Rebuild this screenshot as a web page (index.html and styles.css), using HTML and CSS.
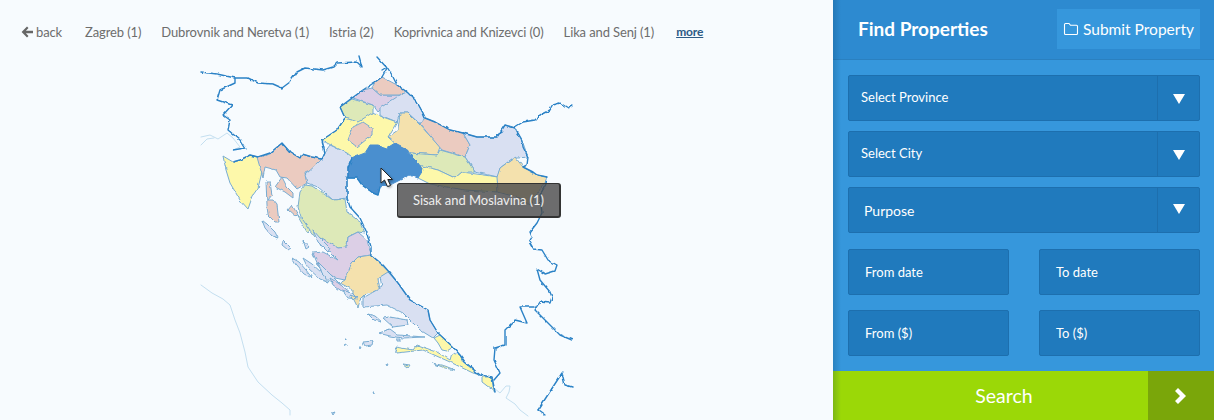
FILE: index.html
```html
<!DOCTYPE html>
<html lang="en">
<head>
<meta charset="utf-8">
<title>Find Properties</title>
<link rel="stylesheet" href="styles.css">
</head>
<body>
<div class="page">
  <main class="main">
    <nav class="crumbs">
      <a class="back" href="#"><svg class="back-icon" viewBox="0 0 12 12"><path d="M6 .6 7.500 2.100 4.900 4.700H12V7.300H4.900L7.500 9.900 6 11.400 .6 6Z"/></svg>back</a>
      <a href="#">Zagreb (1)</a>
      <a href="#">Dubrovnik and Neretva (1)</a>
      <a href="#">Istria (2)</a>
      <a href="#">Koprivnica and Knizevci (0)</a>
      <a href="#">Lika and Senj (1)</a>
      <a class="more" href="#">more</a>
    </nav>
    <div class="map-wrap">
      <svg class="map" viewBox="0 50 833 370" aria-label="Map of Croatia">
        <defs>
          <filter id="rough" filterUnits="userSpaceOnUse" x="0" y="40" width="833" height="380" color-interpolation-filters="sRGB">
            <feTurbulence type="fractalNoise" baseFrequency="0.2" numOctaves="1" seed="4"/>
            <feDisplacementMap in="SourceGraphic" scale="3.400" xChannelSelector="R" yChannelSelector="G"/>
            <feGaussianBlur stdDeviation="0.3"/>
          </filter>
        </defs>
        <!-- neighbouring coast lines -->
        <polyline class="coast" points="201,137 210,135 218,139 227,133 233,138 240,147 233,150"/>
        <polyline class="coast" points="201,145 207,139 214,138"/>
        <polyline class="coast" points="201,285 212,293 223,299 230,305 235,320 240,333 245,352 248,367 258,382 272,395 282,403 290,410 290,415"/>
        <polyline class="coast" points="494,388 500,393 506,386 510,386 509,392 506,398 515,404 520,410 528,416"/>
        <g filter="url(#rough)">
          <!-- counties -->
          <polygon class="yellow" points="223,156 233,162 240,160 250,155 258,157 263,168 258,188 253,195 248,209 240,200 230,183 226,170"/>
          <polygon class="pink" points="257,157 270,154 282,143 290,152 300,158 302,154 322,160 317,168 305,173 307,183 297,189 287,178 280,177 276,170 265,167 263,178"/>
          <polygon class="peri" points="305,175 318,163 323,158 325,152 330,145 347,153 356,158 356,178 347,177 347,198 333,200 318,187 307,183"/>
          <polygon class="green" points="305,185 312,186 333,200 345,199 347,212 360,222 365,233 358,232 348,237 347,247 338,248 320,238 315,237 302,220 298,207 300,192"/>
          <polygon class="purple" points="322,238 338,248 347,247 348,237 358,232 367,240 371,255 358,257 352,263 345,280 335,278 318,265 313,253 323,252 338,260 330,252 320,245"/>
          <polygon class="tan" points="358,257 371,255 390,273 378,278 380,290 367,293 360,300 358,308 353,298 353,290 340,283 345,280 352,263"/>
          <polygon class="peri" points="388,272 398,283 410,300 428,310 430,320 438,333 433,338 420,330 403,313 387,305 363,307 363,298 382,287 380,277"/>
          <polygon class="green" points="340,107 352,99 373,105 373,113 360,123 345,118"/>
          <polygon class="purple" points="353,98 363,90 372,88 380,95 400,95 390,105 382,108 378,112 373,105"/>
          <polygon class="pink" points="372,88 375,82 382,77 397,85 407,92 400,95 380,95"/>
          <polygon class="peri" points="380,108 400,95 407,92 417,102 425,117 420,124 408,113 400,113 397,122 380,115"/>
          <polygon class="yellow" points="322,140 337,130 345,118 358,122 372,113 380,116 397,122 388,137 397,145 410,153 405,162 380,162 356,160 347,153 327,143"/>
          <polygon class="pink" points="348,140 353,127 363,122 372,128 372,135 357,147"/>
          <polygon class="tan" points="388,137 398,130 400,113 408,113 420,125 440,147 437,155 410,153 397,145"/>
          <polygon class="pink" points="420,124 425,118 435,122 450,130 463,133 470,145 465,157 442,150"/>
          <polygon class="peri" points="463,133 477,137 497,137 505,125 515,128 523,143 528,157 518,158 513,158 500,168 498,177 475,172 465,157 470,145"/>
          <polygon class="green" points="410,153 437,155 440,150 465,157 475,172 462,172 455,178 438,170 425,167 415,165"/>
          <polygon class="yellow" points="418,165 438,170 455,178 462,172 498,177 498,192 465,190 430,184 418,178"/>
          <polygon class="tan" points="497,177 500,168 515,157 523,167 537,175 547,177 545,183 538,192 530,205 520,198 498,192"/>
          <polygon class="active" points="348,168 352,158 365,153 370,145 378,145 387,148 395,143 405,148 410,155 418,163 423,170 418,178 410,175 400,180 390,185 380,187 378,195 373,193 362,185 357,178 348,178"/>
          <!-- islands -->
          <polygon class="pink" points="275,187 282,177 287,187 293,193 293,198 285,192"/>
          <polygon class="pink" points="266,182 270,182 272,195 268,200 273,200 277,205 279,222 275,222 268,215 267,205"/>
          <polygon class="pink" points="288,210 292,205 298,215 296,217"/>
          <polygon class="peri" points="262,220 268,225 275,232 278,238 272,236 265,228"/>
          <polygon class="peri" points="283,240 291,248 288,250 282,245"/>
          <polygon class="peri" points="292,258 299,262 306,270 312,278 304,274 296,265"/>
          <polygon class="peri" points="303,258 312,264 322,273 328,282 320,279 308,268"/>
          <polygon class="peri" points="318,262 328,272 338,282 345,290 335,286 322,274"/>
          <polygon class="peri" points="303,240 309,247 306,249"/>
          <polygon class="peri" points="313,230 320,238 330,248 328,252 318,242"/>
          <polygon class="green" points="297,215 303,220 310,230 307,232"/>
          <polygon class="purple" points="330,278 338,283 350,292 343,292 333,285"/>
          <polygon class="peri" points="342,290 352,293 358,299 348,298"/>
          <polygon class="tan" points="350,295 356,297 353,300"/>
          <polygon class="peri" points="368,314 375,316 382,322 374,320"/>
          <polygon class="peri" points="383,318 390,317 407,320 408,325 393,327"/>
          <polygon class="peri" points="378,333 390,329 398,335 425,337 403,338 390,336"/>
          <polygon class="peri" points="363,342 373,341 372,345 365,346"/>
          <polygon class="peri" points="397,339 400,339 400,341 397,341"/>
          <polygon class="yellow" points="434,338 440,335 453,347 447,351 442,350 438,343"/>
          <polygon class="yellow" points="395,347 413,350 417,345 437,352 447,358 450,360 452,353 460,355 463,362 480,375 473,373 450,362 423,350 397,353"/>
          <polygon class="yellow" points="432,363 445,366 455,370 445,368"/>
          <polygon class="yellow" points="403,364 410,365 408,368"/>
          <polygon class="yellow" points="482,377 492,377 493,387 495,392 482,382"/>
          <polygon class="isle" points="386,364 388,364 387,366"/>
          <polygon class="isle" points="345,339 346,339 346,340"/>
          <polygon class="isle" points="344,345 346,344 346,346"/>
          <polygon class="isle" points="359,347 361,347 360,349"/>
          <polygon class="isle" points="373,392 374,392 374,394"/>
          <polygon class="isle" points="332,413 335,412 333,415"/>
          <!-- national borders -->
          <polyline class="border" points="201,72 217,74 235,78 248,78 258,83 273,84 282,88 290,82 297,72 305,68 323,70 333,67 337,63 357,62 362,67 359,56"/>
          <polyline class="border" points="235,78 235,83 220,90 217,100 232,105 223,115 230,120 228,130 240,140 245,148 233,150"/>
          <polyline class="border" points="233,162 240,160 250,155 258,157 270,153 282,143 290,152 300,158 302,154 312,157 322,159 325,153 322,140 337,130 345,118 340,107 352,98 363,90 375,82 382,77 387,68 377,57"/>
          <polyline class="border" points="382,70 387,67 392,75 397,85 407,92 417,102 423,113 425,118 435,122 450,130 463,133 477,137 497,137 505,125 515,128"/>
          <polyline class="border" points="572,106 568,108 560,103 553,105 550,110 540,115 535,120 523,122 515,127 518,133 522,140 523,147 528,157 527,165 523,167 533,172 537,175 547,177 546,184 540,195 541,205 542,213 537,223 530,232 532,237 529,242 533,249 542,250 548,260 557,265 555,271 545,274 537,269 540,280 550,292 552,297 550,303 540,302 535,310 553,328 560,335 572,340"/>
          <polyline class="border" points="535,307 520,307 527,323 515,320 505,330 505,345 495,348 494,360 500,373 494,380"/>
          <polyline class="border" points="538,410 562,373 565,385 572,387"/>
          <polyline class="border" points="538,410 545,415"/>
          <polyline class="border" points="347,177 347,198 350,207 360,218 367,233 371,247 371,255 383,265 390,273 398,283 410,300 428,310 430,320 438,333 453,347 460,355 465,362 480,375 492,377 495,392"/>
          <polyline class="border" points="380,187 378,195 373,193 362,185 357,178 348,178 348,168 352,158"/>
        </g>
      </svg>
      <div class="tip">Sisak and Moslavina (1)</div>
      <svg class="cursor" viewBox="0 0 14 21"><path d="M1 1V16L4.500 13 7.500 19.500 10.500 18.500 7.800 12.500 12.500 12.500Z"/></svg>
    </div>
  </main>
  <aside class="side">
    <header class="side-head">
      <h2 class="side-title">Find Properties</h2>
      <a class="submit" href="#"><svg class="folder" viewBox="0 0 16 14"><path d="M1.500 11.500V2.500C1.500 1.900 1.900 1.500 2.500 1.500H6L7.500 3.300H13.500C14.100 3.300 14.500 3.700 14.500 4.300V11.500C14.500 12.100 14.100 12.500 13.500 12.500H2.500C1.900 12.500 1.500 12.100 1.500 11.500Z"/></svg>Submit Property</a>
    </header>
    <form class="form">
      <div class="selects">
        <div class="field select"><span class="label">Select Province</span><span class="caret"></span></div>
        <div class="field select"><span class="label">Select City</span><span class="caret"></span></div>
        <div class="field select purpose"><span class="label">Purpose</span><span class="caret"></span></div>
      </div>
      <div class="pair">
        <div class="field"><span class="label">From date</span></div>
        <div class="field"><span class="label">To date</span></div>
      </div>
      <div class="pair">
        <div class="field"><span class="label">From ($)</span></div>
        <div class="field"><span class="label">To ($)</span></div>
      </div>
    </form>
    <a class="search" href="#"><span class="search-text">Search</span><span class="search-go"><svg class="chev" viewBox="0 0 14 18"><path d="M4 1 12 9 4 17 1 14 6 9 1 4Z"/></svg></span></a>
  </aside>
</div>
</body>
</html>
```
FILE: styles.css
```css
* { box-sizing: border-box; }
html, body { margin: 0; height: 100%; }
body {
  font-family: "Lato", "Noto Sans", sans-serif;
  background: #f7fbfe;
  overflow: hidden;
}
a { text-decoration: none; color: inherit; }
.page { display: flex; width: 1214px; height: 420px; }

.main { width: 833px; display: flex; flex-direction: column; }
.crumbs {
  height: 50px;
  padding: 24px 0 0 21px;
  display: flex;
  gap: 20px;
  font-size: 13px;
  line-height: 16px;
  letter-spacing: -.12px;
  color: #6d6d6d;
  align-items: flex-start;
}
.back { display: flex; align-items: center; gap: 3px; margin-right: 3px; }
.back-icon { width: 12px; height: 12px; fill: #666; }
.more { margin-left: 2px; font-weight: 700; color: #2d5a85; text-decoration: underline; font-size: 12px; }

.map-wrap { position: relative; flex: 1; }
.map { display: block; width: 833px; height: 370px; }
.map polygon { stroke: #78acd2; stroke-width: 1; stroke-linejoin: round; }
.yellow { fill: #fdf8aa; }
.pink { fill: #ebcbc0; }
.peri { fill: #d9e0f2; }
.green { fill: #dde9b8; }
.purple { fill: #dccfe6; }
.tan { fill: #f4e1ad; }
.isle { fill: #d9e0f2; }
.map polygon.active { fill: #4a8fcf; stroke: #4a8fcf; }
.border, .coast { fill: none; stroke-linejoin: round; stroke-linecap: round; }
.border { stroke: #2b82c6; stroke-width: 1.400; }
.coast { stroke: #c4dff0; stroke-width: 1; }

.tip {
  position: absolute;
  left: 397px;
  top: 133px;
  width: 164px;
  height: 35px;
  background: rgba(72, 72, 72, .8);
  border: 1px solid #333;
  border-width: 1px 2px 2px 1px;
  border-radius: 3px;
  color: #eee;
  font-size: 13px;
  letter-spacing: -.05px;
  line-height: 33px;
  text-align: center;
}
.cursor {
  position: absolute;
  left: 380px;
  top: 117px;
  width: 14px;
  height: 21px;
  fill: #fff;
  stroke: #222;
  stroke-width: 1;
  filter: drop-shadow(1px 1px 1px rgba(0, 0, 0, .35));
}

.side {
  width: 381px;
  display: flex;
  flex-direction: column;
  background: #3697dc;
  color: #fff;
  position: relative;
}
.side::before {
  content: "";
  position: absolute;
  left: 0;
  top: 0;
  bottom: 0;
  width: 8px;
  z-index: 1;
  background: linear-gradient(to right, rgba(0, 50, 80, .2), rgba(0, 50, 80, 0));
}
.side-head {
  height: 60px;
  padding: 9px 14px 0 25px;
  display: flex;
  justify-content: space-between;
  align-items: flex-start;
  background: #2d8ad0;
  border-bottom: 1px solid #2a80c0;
}
.side-title { margin: 0; font-size: 19px; line-height: 40px; font-weight: 700; }
.submit {
  width: 143px;
  height: 40px;
  background: #3697dc;
  display: flex;
  align-items: center;
  justify-content: center;
  gap: 4px;
  font-size: 15.500px;
}
.folder { width: 16px; height: 14px; fill: none; stroke: #fff; stroke-width: 1.100; }

.form { padding: 15px 14px 15px 15px; display: flex; flex-direction: column; gap: 15px; flex: 1; }
.selects { display: flex; flex-direction: column; gap: 10px; margin-bottom: 1px; }
.pair { display: grid; grid-template-columns: 161px 161px; justify-content: space-between; }
.field {
  height: 46px;
  background: #207abd;
  border: 1px solid #1d6fae;
  border-radius: 2px;
  display: flex;
  align-items: center;
  padding-left: 16px;
  font-size: 13px;
}
.select { padding-left: 12px; justify-content: space-between; }
.select .label { padding-bottom: 2px; }
.purpose { padding-left: 15px; font-size: 14px; }
.purpose .label { padding-bottom: 0; }
.caret {
  width: 42px;
  align-self: stretch;
  border-left: 1px solid #1d6fae;
  position: relative;
}
.caret::after {
  content: "";
  position: absolute;
  left: 15px;
  top: 18px;
  border-style: solid;
  border-width: 10px 6px 0 6px;
  border-color: #fff transparent transparent transparent;
}
.purpose .caret::after { top: 16px; }

.search {
  height: 49px;
  display: flex;
  background: #9bd807;
}
.search-text { flex: 1; padding-left: 27px; text-align: center; font-size: 19.500px; line-height: 49px; }
.search-go { width: 66px; background: #7aa60a; display: flex; align-items: center; justify-content: center; }
.chev { width: 14px; height: 18px; fill: #fff; }
```
